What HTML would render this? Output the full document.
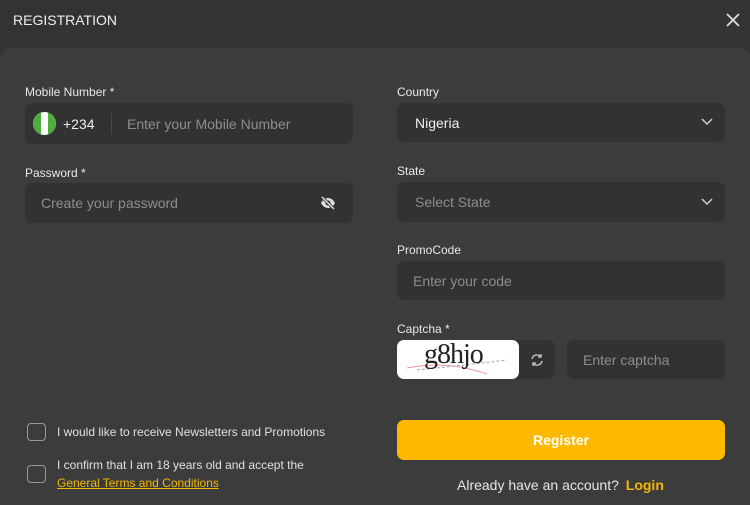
<!DOCTYPE html><html><head><style>
*{margin:0;padding:0;box-sizing:border-box}
body{width:750px;height:505px;background:#333;font-family:"Liberation Sans",sans-serif;position:relative;overflow:hidden;color:#e6e6e6}
.a{position:absolute}
.main{left:0;top:48px;width:750px;height:457px;background:#3c3c3c;border-radius:10px 10px 0 0}
.lbl{font-size:12px;color:#e8e8e8}
.in{background:#323232;border-radius:7px;font-size:14px;color:#8d8d8d}
.ph{position:absolute;top:50%;transform:translateY(-50%)}
.cb{width:19px;height:18px;border:1.5px solid #9a9a9a;border-radius:4px}
.t{font-size:12px;color:#e0e0e0}
</style></head><body>
<div class="a" style="left:13px;top:12px;font-size:14px;color:#eee">REGISTRATION</div>
<svg class="a" style="left:725px;top:12px" width="16" height="16"><path d="M2 2L14 14M14 2L2 14" stroke="#ddd" stroke-width="1.8"/></svg>
<div class="a main"></div>
<div class="a lbl" style="left:25px;top:85px">Mobile Number *</div>
<div class="a in" style="left:25px;top:103px;width:328px;height:41px">
<div class="a" style="left:8px;top:9px;width:23px;height:23px;border-radius:50%;overflow:hidden;background:#fff;"><div style="position:absolute;left:0;top:0;width:8px;height:23px;background:#4caf3c"></div><div style="position:absolute;right:0;top:0;width:8px;height:23px;background:#4caf3c"></div></div>
<span class="ph" style="left:38px;color:#eee">+234</span>
<div class="a" style="left:86px;top:10px;width:1px;height:21px;background:#474747"></div>
<span class="ph" style="left:102px">Enter your Mobile Number</span></div>
<div class="a lbl" style="left:25px;top:166px">Password *</div>
<div class="a in" style="left:25px;top:183px;width:328px;height:40px"><span class="ph" style="left:16px">Create your password</span>
<svg class="a" style="left:295px;top:13px" width="16" height="14" viewBox="0 0 16 14"><path d="M1 7C3 3 6 2 8 2S13 3 15 7C13 11 10 12 8 12S3 11 1 7Z" fill="#ddd"/><circle cx="8" cy="7" r="2.5" fill="#323232"/><path d="M2 1L14 13" stroke="#323232" stroke-width="3"/><path d="M2 1L14 13" stroke="#ddd" stroke-width="1.5"/></svg></div>
<div class="a lbl" style="left:397px;top:85px">Country</div>
<div class="a in" style="left:397px;top:103px;width:328px;height:39px"><span class="ph" style="left:18px;color:#eee">Nigeria</span>
<svg class="a" style="left:304px;top:15px" width="12" height="8"><path d="M1 1L6 6L11 1" stroke="#ccc" stroke-width="1.5" fill="none"/></svg></div>
<div class="a lbl" style="left:397px;top:164px">State</div>
<div class="a in" style="left:397px;top:182px;width:328px;height:40px"><span class="ph" style="left:18px">Select State</span>
<svg class="a" style="left:304px;top:16px" width="12" height="8"><path d="M1 1L6 6L11 1" stroke="#ccc" stroke-width="1.5" fill="none"/></svg></div>
<div class="a lbl" style="left:397px;top:243px">PromoCode</div>
<div class="a in" style="left:397px;top:261px;width:328px;height:39px"><span class="ph" style="left:16px">Enter your code</span></div>
<div class="a lbl" style="left:397px;top:322px">Captcha *</div>
<div class="a in" style="left:397px;top:340px;width:158px;height:39px"></div>
<div class="a" style="left:397px;top:340px;width:122px;height:39px;background:#fff;border-radius:7px;overflow:hidden">
<svg class="a" style="left:0;top:0" width="122" height="39"><path d="M10 28Q50 20 90 34" stroke="#e99" fill="none"/><path d="M20 30Q60 26 110 20" stroke="#9ac" fill="none" stroke-dasharray="3 2"/></svg>
<span class="a" style="left:27px;top:-1px;font-family:'Liberation Serif',serif;font-size:28px;color:#222;letter-spacing:-1px">g8hjo</span></div>
<svg class="a" style="left:530px;top:353px" width="14" height="14" viewBox="0 0 14 14"><path d="M2 6A5 5 0 0 1 11 4M12 8A5 5 0 0 1 3 10" stroke="#ccc" stroke-width="1.3" fill="none"/><path d="M11 1V4H8M3 13V10H6" stroke="#ccc" stroke-width="1.3" fill="none"/></svg>
<div class="a in" style="left:567px;top:340px;width:158px;height:39px"><span class="ph" style="left:16px">Enter captcha</span></div>
<div class="a cb" style="left:27px;top:423px"></div>
<div class="a t" style="left:57px;top:425px">I would like to receive Newsletters and Promotions</div>
<div class="a cb" style="left:27px;top:465px"></div>
<div class="a t" style="left:57px;top:458px">I confirm that I am 18 years old and accept the</div>
<div class="a t" style="left:57px;top:476px;color:#f5b800;text-decoration:underline">General Terms and Conditions</div>
<div class="a" style="left:397px;top:420px;width:328px;height:40px;background:#fdb900;border-radius:7px;color:#fff;font-weight:bold;font-size:14px;text-align:center;line-height:40px">Register</div>
<div class="a" style="left:457px;top:477px;font-size:14px;color:#e6e6e6">Already have an account? <b style="color:#f5b800;margin-left:3px">Login</b></div>
</body></html>
